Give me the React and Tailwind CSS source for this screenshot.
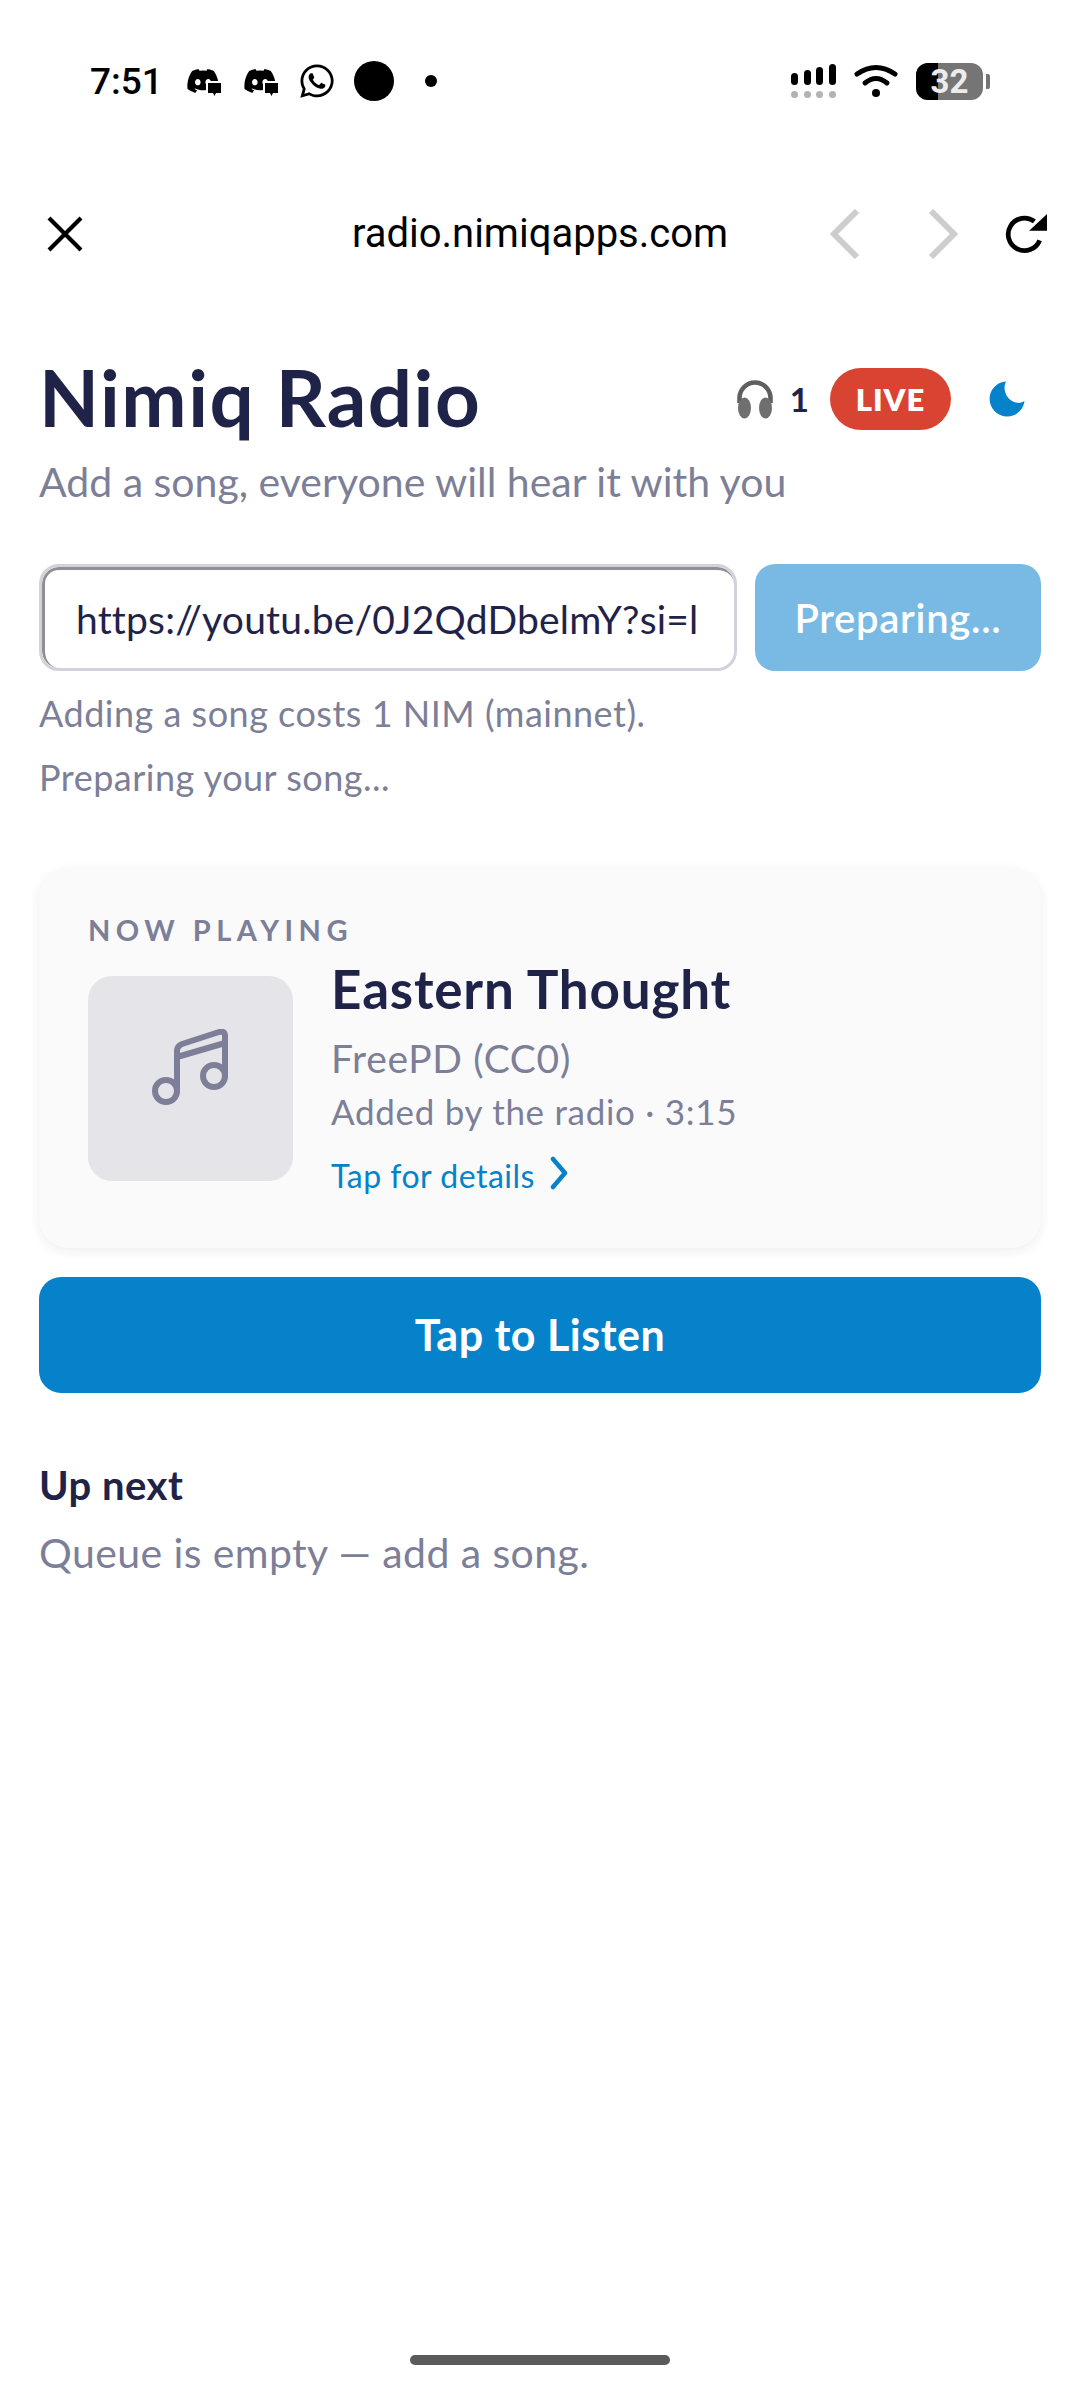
import { FaDiscord, FaWhatsapp } from 'react-icons/fa';

const sans = 'font-["Lato","Noto_Sans",sans-serif]';

function DiscordBadge() {
  return (
    <span className="relative block w-[34px] h-[30px]">
      <FaDiscord className="absolute left-0 top-0 w-[34px] h-[30px] text-black" />
      <svg className="absolute left-[20px] top-[15px]" width="16" height="16" viewBox="0 0 16 16">
        <path d="M0 0h16v16H0z" fill="#fff" />
        <path d="M2 2h13v10H10l-1.5 3L7 12H2z" fill="#000" />
      </svg>
    </span>
  );
}

function SignalBars() {
  const heights = [12, 15, 18, 21];
  return (
    <div className="flex flex-col justify-end gap-[6px] h-[34px]">
      <div className="flex items-end gap-[5.7px]">
        {heights.map((h) => (
          <span key={h} className="block w-[7px] rounded-full bg-black" style={{ height: h }} />
        ))}
      </div>
      <div className="flex gap-[5.7px]">
        {heights.map((h) => (
          <span key={h} className="block w-[7px] h-[7px] rounded-full bg-[#b3b3b3]" />
        ))}
      </div>
    </div>
  );
}

function Wifi() {
  return (
    <svg width="44" height="35" viewBox="0 0 44 35" fill="none" stroke="#000" strokeWidth="5" strokeLinecap="round">
      <path d="M3 10 Q22 -3 41 10" />
      <path d="M11 19 Q22 10 33 19" />
      <circle cx="22" cy="29" r="4" fill="#000" stroke="none" />
    </svg>
  );
}

function Battery() {
  return (
    <div className="flex items-center gap-[3px]">
      <div className="relative w-[67px] h-[37px] rounded-[12px] overflow-hidden bg-[#757575]">
        <div className="w-[22px] h-full bg-black" />
        <span className="absolute inset-0 flex items-center justify-center font-['Roboto',sans-serif] font-bold text-[33px] leading-none text-[#ececec]">32</span>
      </div>
      <span className="block w-[4px] h-[15px] rounded-r-[2px] bg-[#757575]" />
    </div>
  );
}

function StatusBar() {
  return (
    <div className="h-[160px] pl-[90px] pr-[90px] pt-[61px] flex justify-between items-start">
      <div className="flex items-center h-[40px]">
        <span className="font-['Roboto',sans-serif] font-medium text-[37px] leading-none text-black w-[96px]">7:51</span>
        <DiscordBadge />
        <span className="w-[23px]" />
        <DiscordBadge />
        <FaWhatsapp className="ml-[21px] w-[38px] h-[38px] text-black" />
        <span className="ml-[18px] block w-[40px] h-[40px] rounded-full bg-black" />
        <span className="ml-[31px] block w-[12px] h-[12px] rounded-full bg-black" />
      </div>
      <div className="flex items-center gap-[18px] h-[40px]">
        <SignalBars />
        <Wifi />
        <Battery />
      </div>
    </div>
  );
}

function BrowserBar() {
  return (
    <div className="h-[148px] pl-[47px] pr-[33px] flex items-center justify-between">
      <svg width="36" height="36" viewBox="0 0 36 36" fill="none" stroke="#000" strokeWidth="4.2">
        <path d="M2 2 L34 34 M34 2 L2 34" />
      </svg>
      <span className="absolute left-0 w-full text-center font-['Roboto',sans-serif] text-[40px] leading-none text-black pointer-events-none">radio.nimiqapps.com</span>
      <div className="flex items-center">
        <svg width="30" height="50" viewBox="0 0 30 50" fill="none" stroke="#cdcdcd" strokeWidth="6">
          <path d="M27 2 L4 25 L27 48" />
        </svg>
        <svg className="ml-[68px]" width="30" height="50" viewBox="0 0 30 50" fill="none" stroke="#cdcdcd" strokeWidth="6">
          <path d="M3 2 L26 25 L3 48" />
        </svg>
        <svg className="ml-[47px]" width="42" height="42" viewBox="0 0 40 40" fill="none">
          <path d="M33 26 A15.5 15.5 0 1 1 28 8" stroke="#000" strokeWidth="4.5" />
          <path d="M40 1 V17 H23 Z" fill="#000" />
        </svg>
      </div>
    </div>
  );
}

function Header() {
  return (
    <div className="flex items-center justify-between h-[84px]">
      <h1 className="-mt-[5px] text-[78px] leading-none font-bold tracking-[1.5px] text-[#1f2348]">Nimiq Radio</h1>
      <div className="flex items-center mr-[16px]">
        <svg width="40" height="40" viewBox="0 0 40 40">
          <path d="M4.5 24 V19 A15.5 15.5 0 0 1 35.5 19 V24" fill="none" stroke="#5f5f5f" strokeWidth="4.5" />
          <ellipse cx="9.5" cy="29" rx="6.5" ry="10.5" fill="#6f6f6f" />
          <ellipse cx="30.5" cy="29" rx="6.5" ry="10.5" fill="#6f6f6f" />
        </svg>
        <span className="ml-[15px] text-[33px] leading-none font-bold text-[#1f2348]">1</span>
        <span className="ml-[21px] w-[121px] h-[62px] rounded-full bg-[#d94432] text-white text-[31px] font-extrabold tracking-[1px] flex items-center justify-center">LIVE</span>
        <svg className="ml-[38px]" width="36" height="36" viewBox="0 0 36 36">
          <path d="M17 0.5 A17.5 17.5 0 1 0 35.5 20 A14 14 0 0 1 30 22 A15 15 0 0 1 17 0.5 Z" fill="#0582ca" />
        </svg>
      </div>
    </div>
  );
}

function SongForm() {
  return (
    <div className="mt-[59px]">
      <div className="flex gap-[18px]">
        <div className="w-[698px] h-[107px] rounded-[20px] border-[3px] border-[#d2d2da] overflow-hidden">
          <div className="h-full rounded-[17px] border-l-[3px] border-t-[3px] border-[#8f8f94] pl-[31px] flex items-center overflow-hidden bg-white">
            <span className="whitespace-nowrap text-[39px] tracking-[0.2px] text-[#1f2348] w-[622px] overflow-hidden">https://youtu.be/0J2QdDbelmY?si=l</span>
          </div>
        </div>
        <div className="flex-1 h-[107px] rounded-[20px] bg-[#78bae3] text-white text-[40px] tracking-[0.7px] font-semibold flex items-center justify-center">Preparing...</div>
      </div>
      <p className="mt-[22px] text-[36px] tracking-[0.5px] leading-[40px] text-[#7c7f97]">Adding a song costs 1 NIM (mainnet).</p>
      <p className="mt-[24px] text-[36px] tracking-[0.5px] leading-[40px] text-[#7c7f97]">Preparing your song...</p>
    </div>
  );
}

function NowPlaying() {
  return (
    <div className="mt-[71px] h-[380px] rounded-[30px] bg-[#fafafb] shadow-[0_3px_12px_rgba(31,35,72,0.08)] pt-[47px] pl-[49px] pr-[40px]">
      <div className="text-[29px] leading-none font-bold tracking-[5.5px] text-[#7c7f97]">NOW PLAYING</div>
      <div className="mt-[32px] flex">
        <div className="w-[205px] h-[205px] rounded-[24px] bg-[#e4e4e9] flex items-center justify-center">
          <svg className="-mt-[20px]" width="80" height="80" viewBox="0 0 80 80" fill="none" stroke="#7c7f97" strokeWidth="6" strokeLinecap="round" strokeLinejoin="round">
            <path d="M26 62 V22 Q26 17 31 15 L68 3 Q74 1.5 74 7 V47" />
            <path d="M26 28 L74 14" />
            <circle cx="15" cy="62" r="11" />
            <circle cx="63" cy="47" r="11" />
          </svg>
        </div>
        <div className="ml-[38px] -mt-[17px]">
          <div className="text-[53px] tracking-[0.8px] leading-[60px] font-bold text-[#1f2348]">Eastern Thought</div>
          <div className="mt-[16px] text-[39px] tracking-[0.7px] leading-[46px] text-[#7c7f97]">FreePD (CC0)</div>
          <div className="mt-[7px] text-[35px] tracking-[0.7px] leading-[46px] text-[#7c7f97]">Added by the radio · 3:15</div>
          <div className="mt-[22px] flex items-center text-[32px] tracking-[0.5px] leading-[40px] text-[#0582ca]">
            Tap for details
            <svg className="ml-[14px] -mt-[6px]" width="20" height="34" viewBox="0 0 20 34" fill="none" stroke="#0582ca" strokeWidth="4.5" strokeLinecap="round" strokeLinejoin="round">
              <path d="M4 3 L16 17 L4 31" />
            </svg>
          </div>
        </div>
      </div>
    </div>
  );
}

export default function App() {
  return (
    <div className={`relative w-[1080px] h-[2404px] bg-white overflow-hidden ${sans}`}>
      <StatusBar />
      <BrowserBar />
      <div className="px-[39px] pt-[49px]">
        <Header />
        <p className="mt-[18px] text-[41px] leading-[46px] text-[#7c7f97]">Add a song, everyone will hear it with you</p>
        <SongForm />
        <NowPlaying />
        <div className="mt-[29px] h-[116px] rounded-[22px] bg-[#0582ca] text-white text-[43px] tracking-[0.5px] font-bold flex items-center justify-center">Tap to Listen</div>
        <div className="mt-[69px] text-[40px] tracking-[0.5px] leading-[46px] font-bold text-[#1f2348]">Up next</div>
        <p className="mt-[22px] text-[41px] tracking-[0.4px] leading-[46px] text-[#7c7f97]">Queue is empty — add a song.</p>
      </div>
      <div className="absolute left-[410px] top-[2355px] w-[260px] h-[10px] rounded-full bg-[#5a5a5a]" />
    </div>
  );
}
